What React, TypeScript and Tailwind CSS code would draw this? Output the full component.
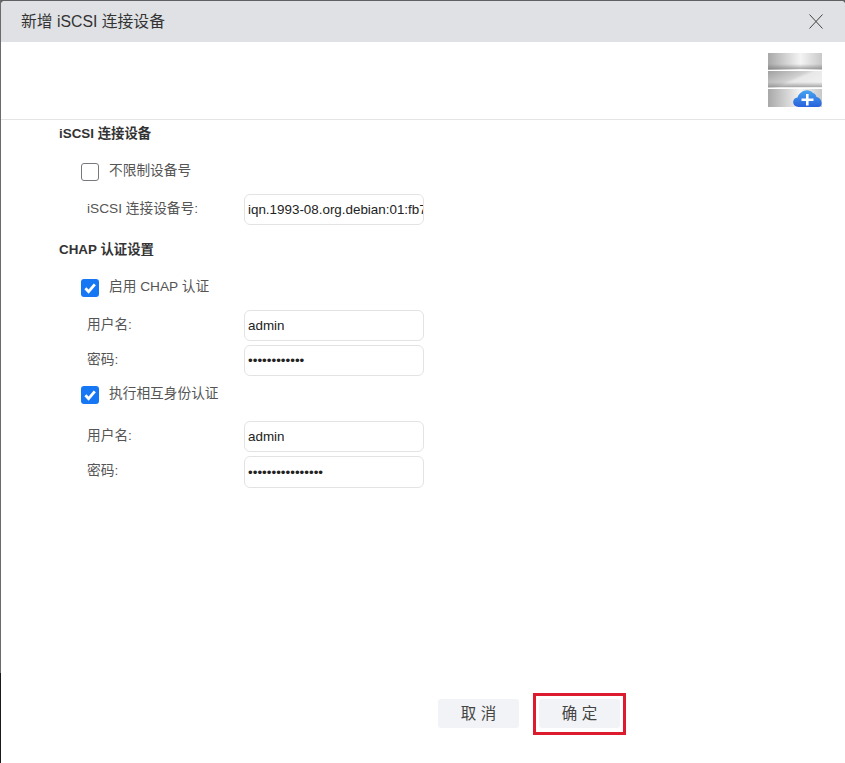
import React from "react";

const font = { fontFamily: '"Liberation Sans","Noto Sans CJK SC",sans-serif' };

function Check({ on, label }: { on?: boolean; label: string }) {
  return (
    <div className="ml-[22px] flex h-[18px] items-center">
      {on ? (
        <span className="flex h-[18px] w-[18px] items-center justify-center rounded-[3px] bg-[#1677f5]">
          <svg width="14" height="14" viewBox="0 0 14 14" fill="none">
            <path d="M2.4 7.2 L5.6 10.6 L11.8 3.4" stroke="#fff" strokeWidth="2.8" />
          </svg>
        </span>
      ) : (
        <span className="h-[18px] w-[18px] rounded-[3px] border border-[#77797c] bg-white" />
      )}
      <span className="ml-[10px] pb-[1px] text-[13.7px] text-[#555]">{label}</span>
    </div>
  );
}

function Field({ label, value, type = "text", h = "h-[31px]", up = "pb-[1px]" }: { label: string; value: string; type?: string; h?: string; up?: string }) {
  return (
    <div className="flex items-center">
      <span className={`${up} ml-[28px] w-[157px] text-[13.7px] text-[#555]`}>{label}</span>
      <input
        readOnly
        type={type}
        value={value}
        style={font}
        className={`${h} w-[180px] rounded-[6px] border border-[#e3e3e3] bg-white pl-[3px] pr-0 text-[13.4px] text-[#222] outline-none`}
      />
    </div>
  );
}

function StorageIcon() {
  return (
    <svg width="54" height="54" viewBox="0 0 54 54">
      <defs>
        <linearGradient id="a" x1="0" x2="1" y1="0" y2="0">
          <stop offset="0" stopColor="#a8a8a8" />
          <stop offset="0.6" stopColor="#f4f4f4" />
          <stop offset="1" stopColor="#c8c8c8" />
        </linearGradient>
        <linearGradient id="b" x1="0" x2="1" y1="0" y2="0.7">
          <stop offset="0" stopColor="#a0a0a0" />
          <stop offset="0.5" stopColor="#d0d0d0" />
          <stop offset="0.6" stopColor="#e8e8e8" />
          <stop offset="1" stopColor="#f0f0f0" />
        </linearGradient>
        <linearGradient id="c" x1="0" y1="0" x2="0" y2="1">
          <stop offset="0" stopColor="#45a4f2" />
          <stop offset="1" stopColor="#2a62dc" />
        </linearGradient>
        <linearGradient id="s" x1="0" y1="0" x2="0" y2="1">
          <stop offset="0" stopColor="#777" stopOpacity="0" />
          <stop offset="1" stopColor="#777" stopOpacity="0.6" />
        </linearGradient>
      </defs>
      <rect x="0" y="0" width="54" height="17" fill="url(#a)" />
      <rect x="0" y="11" width="54" height="5" fill="url(#s)" />
      <rect x="0" y="18" width="54" height="17" fill="url(#b)" />
      <rect x="0" y="29" width="54" height="5" fill="url(#s)" />
      <rect x="0" y="36" width="54" height="18" fill="url(#a)" />
      <path d="M31 54 C23.5 54 23.5 45 29.5 44.5 C31 38.5 40 34 45 40 C47 40.5 48 42 48.5 44 C54.5 45 55.5 54 50 54 Z" fill="url(#c)" />
      <path d="M39.3 41 V52.5 M33.5 46.8 H45.5" stroke="#fff" strokeWidth="2.6" />
    </svg>
  );
}

export default function App() {
  return (
    <div style={font} className="flex h-[763px] w-[845px] overflow-hidden bg-[#5f6062]">
      <div className="flex w-px flex-col">
        <div className="h-[673px] bg-[#6b6b6b]" />
        <div className="flex-1 bg-[#1a1a1a]" />
      </div>
      <div className="mt-px flex min-w-0 flex-1 flex-col overflow-hidden rounded-t-[4px] bg-white">
        <header className="flex h-[41px] items-center justify-between bg-[#dfe1e4] pl-[20px] pr-[22px]">
          <h1 className="text-[15.8px] font-normal text-[#333]">新增 iSCSI 连接设备</h1>
          <svg width="14" height="15" viewBox="0 0 14 15" fill="none">
            <path d="M0.5 0.5 L13.5 14.5 M13.5 0.5 L0.5 14.5" stroke="#444" strokeWidth="1" />
          </svg>
        </header>
        <div className="flex h-[78px] items-start justify-end border-b border-[#e4e4e4] pr-[23px] pt-[11px]">
          <StorageIcon />
        </div>
        <main className="flex flex-1 flex-col pl-[58px]">
          <h2 className="mt-[5px] text-[13.4px] font-bold leading-[18px] text-[#333]">iSCSI 连接设备</h2>
          <div className="mt-[20px]">
            <Check label="不限制设备号" />
          </div>
          <div className="mt-[13px]">
            <Field label="iSCSI 连接设备号:" value="iqn.1993-08.org.debian:01:fb7a3c91d2e4" />
          </div>
          <h2 className="mt-[16px] text-[13.4px] font-bold leading-[18px] text-[#333]">CHAP 认证设置</h2>
          <div className="mt-[20px]">
            <Check on label="启用 CHAP 认证" />
          </div>
          <div className="mt-[13px] flex flex-col gap-[4px]">
            <Field label="用户名:" value="admin" />
            <Field label="密码:" value="••••••••••••" />
          </div>
          <div className="mt-[10px]">
            <Check on label="执行相互身份认证" />
          </div>
          <div className="mt-[17px] flex flex-col gap-[4px]">
            <Field label="用户名:" value="admin" />
            <Field label="密码:" value="••••••••••••••••" h="h-[32px]" />
          </div>
        </main>
        <footer className="flex items-start justify-end pb-[28px] pr-[219px]">
          <button className="mt-[6px] h-[29px] w-[81px] rounded-[3px] bg-[#f1f3f7] text-[15.5px] text-[#444]">取 消</button>
          <div className="ml-[14px] flex h-[42px] w-[93px] items-start justify-center border-[3px] border-[#dc1c2e] pt-[3px]">
            <button className="h-[29px] w-[81px] rounded-[3px] bg-[#f1f3f7] text-[15.5px] text-[#444]">确 定</button>
          </div>
        </footer>
      </div>
    </div>
  );
}
